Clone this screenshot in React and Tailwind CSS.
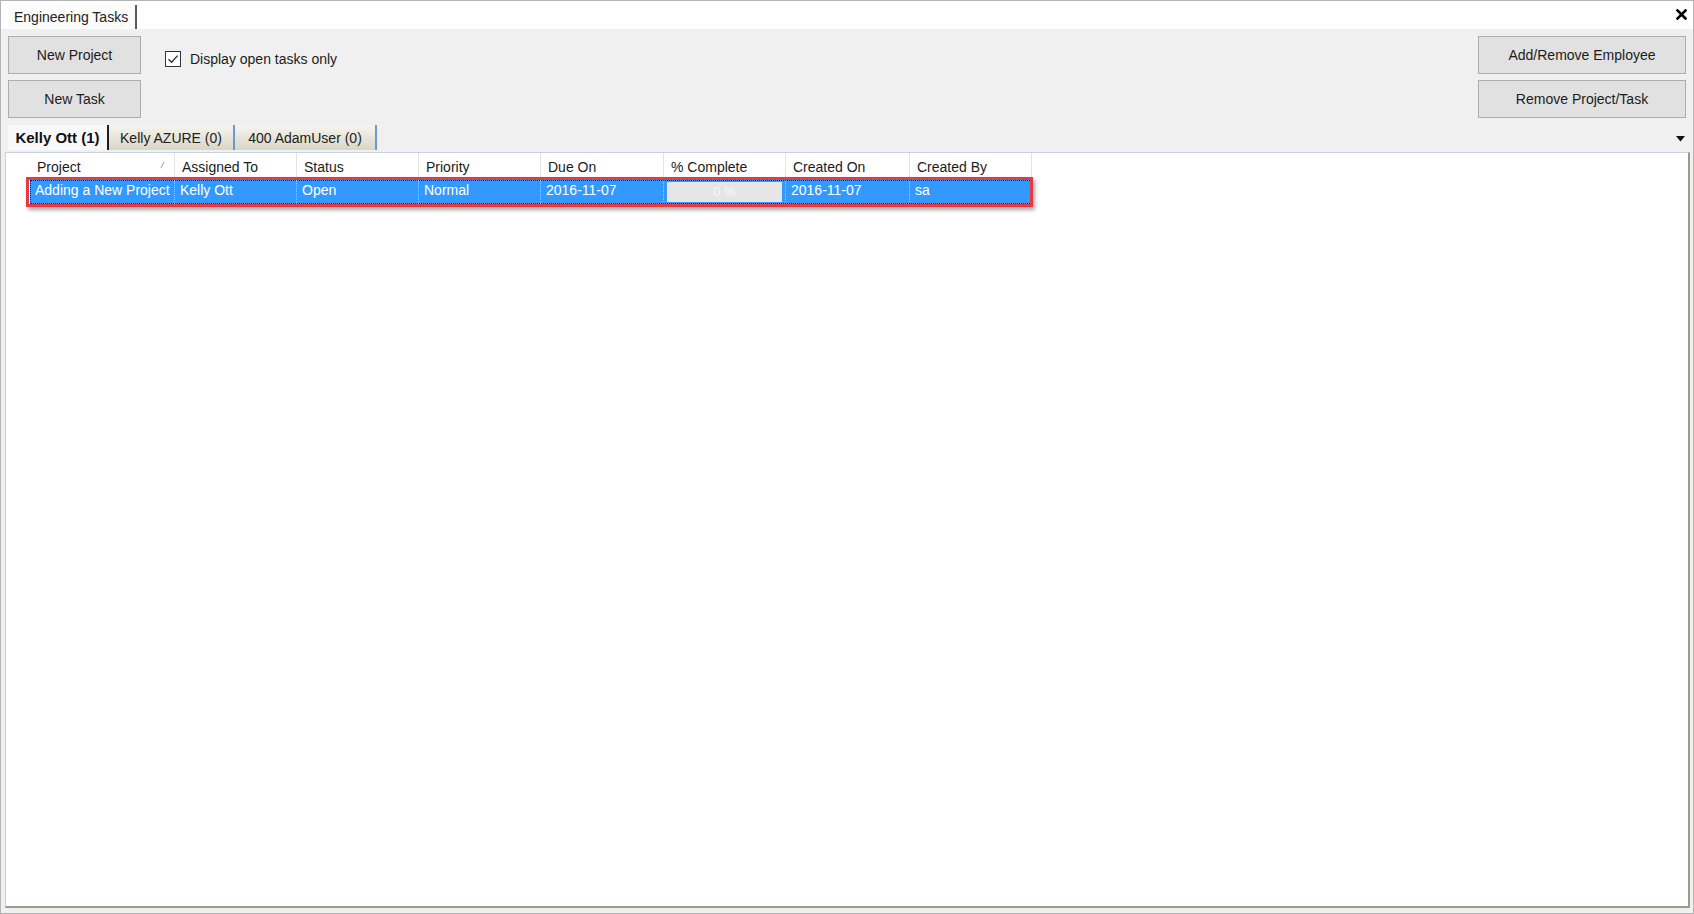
import React from "react";

const font = { fontFamily: '"Liberation Sans", Arial, Helvetica, sans-serif' };

const cols = [
  { label: "Project", w: "w-[145px]" },
  { label: "Assigned To", w: "w-[122px]" },
  { label: "Status", w: "w-[122px]" },
  { label: "Priority", w: "w-[122px]" },
  { label: "Due On", w: "w-[123px]" },
  { label: "% Complete", w: "w-[122px]" },
  { label: "Created On", w: "w-[124px]" },
  { label: "Created By", w: "w-[122px]" },
];

const rowVals = [
  "Adding a New Project",
  "Kelly Ott",
  "Open",
  "Normal",
  "2016-11-07",
  null,
  "2016-11-07",
  "sa",
];

function Btn({ children, w }) {
  return (
    <div
      className={`${w} h-[38px] flex items-center justify-center bg-[#e1e1e1] border border-[#adadad] text-[14px] text-[#1c1c1c]`}
    >
      {children}
    </div>
  );
}

export default function App() {
  return (
    <div
      style={font}
      className="w-[1694px] h-[914px] bg-[#f0f0f0] border border-[#b4b4b4] flex flex-col overflow-hidden text-[14px] text-[#1b1b1b]"
    >
      {/* top title strip */}
      <div className="h-[28px] bg-white flex items-end justify-between pl-[7px] pr-[6px] shrink-0">
        <div className="h-[24px] w-[129px] bg-[#fbfbfb] border-r-[2px] border-[#5a5a5a] flex items-center pl-[6px] text-[#222]">
          Engineering Tasks
        </div>
        <div className="h-full flex items-center pb-[2px]">
          <svg width="11" height="11" viewBox="0 0 11 11">
            <path d="M1.5 1.5 L9.5 9.5 M9.5 1.5 L1.5 9.5" stroke="#000" strokeWidth="2.6" strokeLinecap="square" />
          </svg>
        </div>
      </div>

      {/* toolbar */}
      <div className="h-[96px] flex justify-between pl-[7px] pr-[7px] pt-[7px] shrink-0">
        <div className="flex">
          <div className="flex flex-col gap-[6px]">
            <Btn w="w-[133px]">New Project</Btn>
            <Btn w="w-[133px]">New Task</Btn>
          </div>
          <div className="ml-[24px] mt-[15px] flex items-start gap-[9px]">
            <div className="w-[16px] h-[16px] border border-[#333] bg-white flex items-center justify-center">
              <svg width="12" height="12" viewBox="0 0 12 12">
                <path d="M1.5 6.2 L4.6 9.3 L10.6 2.6" fill="none" stroke="#333" strokeWidth="1.4" />
              </svg>
            </div>
            <span className="leading-[16px] text-[#1c1c1c]">Display open tasks only</span>
          </div>
        </div>
        <div className="flex flex-col gap-[6px]">
          <Btn w="w-[208px]">Add/Remove Employee</Btn>
          <Btn w="w-[208px]">Remove Project/Task</Btn>
        </div>
      </div>

      {/* employee tabs */}
      <div className="h-[25px] flex items-stretch justify-between pl-[7px] pr-[8px] shrink-0">
        <div className="flex items-stretch">
          <div className="w-[101px] bg-[#f8f8f8] border-r-[2px] border-[#1e1e1e] flex items-center justify-center pt-[2px] font-bold text-[15px] text-[#111]">
            Kelly Ott (1)
          </div>
          <div className="w-[126px] bg-linear-to-b from-[#f6f5f0] to-[#d9d6c6] border-r-[2px] border-[#6e98d4] flex items-center justify-center pt-[2px] text-[#222]">
            Kelly AZURE (0)
          </div>
          <div className="w-[142px] bg-linear-to-b from-[#f6f5f0] to-[#d9d6c6] border-r-[2px] border-[#6e98d4] flex items-center justify-center pt-[2px] text-[#222]">
            400 AdamUser (0)
          </div>
        </div>
        <div className="flex items-center pt-[2px]">
          <svg width="9" height="6" viewBox="0 0 9 6">
            <path d="M0 0 L9 0 L4.5 5.5 Z" fill="#111" />
          </svg>
        </div>
      </div>

      {/* grid */}
      <div className="flex-1 mt-[2px] ml-[4px] mr-[3px] mb-[5px] bg-white border-t border-l border-[#c6d3df] border-r-[2px] border-b-[2px] border-r-[#9c9a86] border-b-[#9c9a86] flex flex-col">
        {/* header */}
        <div className="h-[24px] flex items-stretch shrink-0">
          <div className="w-[24px]" />
          {cols.map((c, i) => (
            <div
              key={c.label}
              className={`${c.w} flex items-center justify-between pl-[7px] pr-[9px] pt-[4px] border-r border-[#e3e3e3] text-[#1b1b1b]`}
            >
              <span>{c.label}</span>
              {i === 0 && (
                <svg width="5" height="8" viewBox="0 0 5 8" className="mb-[4px]">
                  <path d="M0.8 7.2 L4.2 0.8" stroke="#9a9a9a" strokeWidth="1" />
                </svg>
              )}
            </div>
          ))}
        </div>

        {/* selected row */}
        <div className="mt-[3px] flex">
          <div className="w-[24px]" />
          <div className="relative flex h-[24px] bg-[#3399ff] outline outline-dotted outline-[#1a2a40] -outline-offset-1">
            {cols.map((c, i) => (
              <div
                key={c.label}
                className={`${c.w} h-full flex items-center border-r border-dotted border-[#a9cdf5] text-white ${
                  i === 5 ? "px-[3px] py-[2px]" : "pl-[5px] pb-[3px]"
                }`}
              >
                {rowVals[i] !== null ? (
                  <span className="whitespace-nowrap">{rowVals[i]}</span>
                ) : (
                  <div className="w-full h-full bg-[#e6e6e6] flex items-center justify-center text-[#f7f7f7] text-[13px]">
                    0 %
                  </div>
                )}
              </div>
            ))}
            <div className="absolute left-[-4px] top-[-3px] w-[1007px] h-[30px] border-[3px] border-[#e63a40] shadow-[2px_3px_4px_rgba(0,0,0,0.35)] pointer-events-none" />
          </div>
        </div>
      </div>
    </div>
  );
}
